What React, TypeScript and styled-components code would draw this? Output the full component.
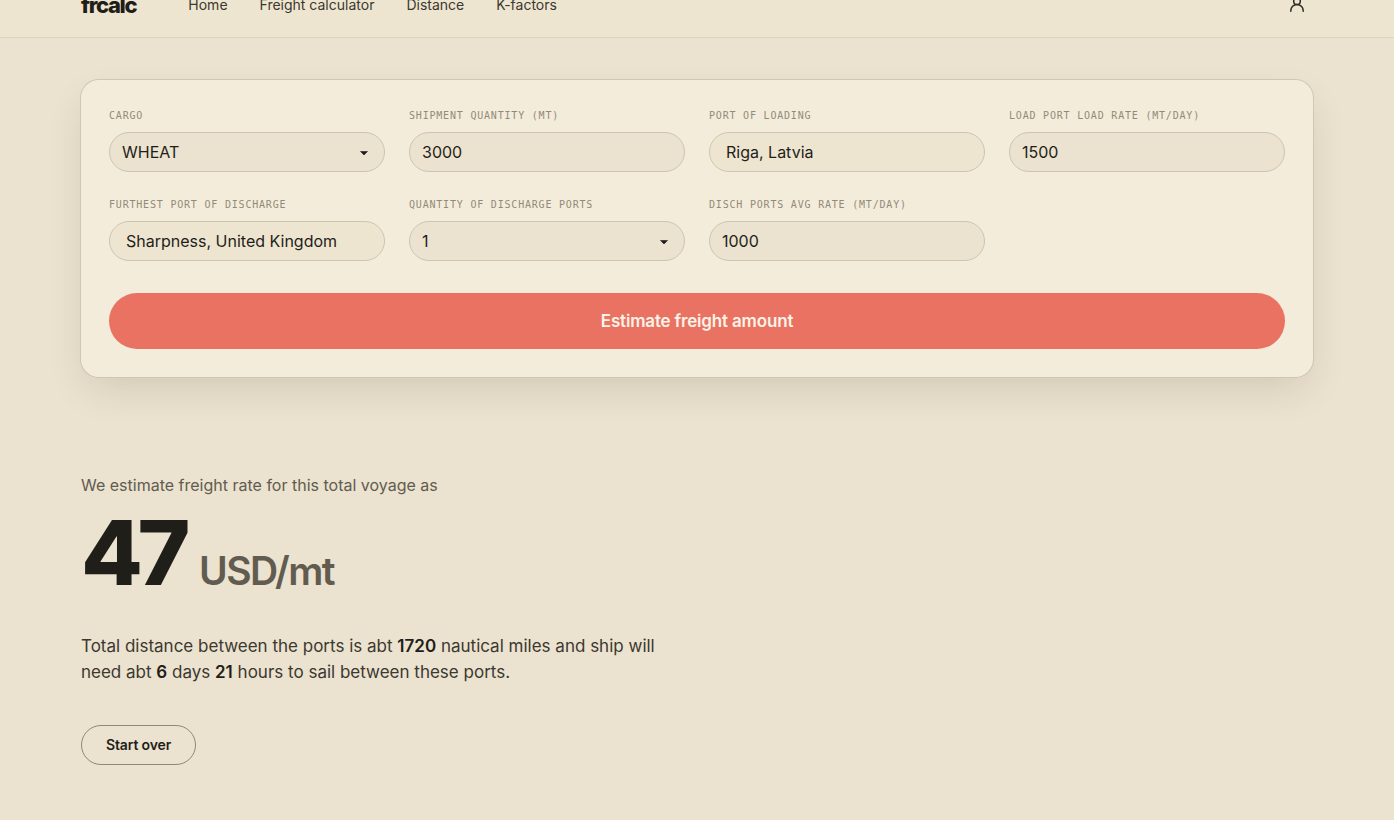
import React, { useId, useState } from "react";
import styled, { createGlobalStyle, css } from "styled-components";

const sans = `Inter, "Liberation Sans", sans-serif`;
const mono = `"DejaVu Sans Mono", "Liberation Mono", monospace`;

const GlobalStyle = createGlobalStyle`
  *, *::before, *::after { box-sizing: border-box; }
  html { background: #ebe2cf; }
  body {
    margin: 0;
    background: #ebe2cf;
    color: #1f1e19;
    font-family: ${sans};
    font-size: 16px;
    line-height: 24px;
    overflow: hidden auto;
  }
  button, input, select { font: inherit; color: inherit; }
`;

const Header = styled.header`
  margin-top: -28px;
  background: #eee5d0;
  border-bottom: 1px solid #ddd3c0;
`;

const Container = styled.div`
  width: 100%;
  max-width: 1280px;
  margin: 0 auto;
  padding: 0 24px;
`;

const HeaderRow = styled(Container)`
  display: flex;
  align-items: center;
  height: 65px;
`;

const Logo = styled.a`
  margin-right: 52px;
  color: #1f1e19;
  font-size: 22px;
  font-weight: 800;
  letter-spacing: -0.06em;
  text-decoration: none;
`;

const Nav = styled.nav`
  display: flex;
  gap: 32px;
`;

const NavLink = styled.a`
  color: #3b382f;
  font-size: 14px;
  text-decoration: none;
`;

const AccountButton = styled.button`
  display: grid;
  place-items: center;
  width: 32px;
  height: 32px;
  margin-left: auto;
  padding: 0;
  border: 0;
  background: none;
  cursor: pointer;
`;

const Main = styled(Container).attrs({ as: "main" })`
  padding-top: 42px;
  padding-bottom: 55px;
`;

const Card = styled.form`
  padding: 27px 28px 28px;
  border-radius: 18px;
  background: #f4ecda;
  box-shadow:
    0 0 0 1px #cfc6b4,
    0 16px 40px -8px rgba(60, 56, 40, 0.16);
`;

const Fields = styled.div`
  display: grid;
  grid-template-columns: repeat(4, minmax(0, 1fr));
  gap: 24px;
  margin-bottom: 32px;
`;

const Field = styled.div`
  display: flex;
  flex-direction: column;
  gap: 7px;
`;

const Label = styled.label`
  color: #928a79;
  font-family: ${mono};
  font-size: 10px;
  line-height: 18px;
  letter-spacing: 0.08em;
  text-transform: uppercase;
  white-space: nowrap;
`;

const control = css`
  width: 100%;
  height: 40px;
  margin: 0;
  border: 1px solid #cdc4b2;
  border-radius: 20px;
  outline: none;
  background: #ebe2d0;
  color: #1f1e19;
`;

const Input = styled.input<{ $port?: boolean }>`
  ${control}
  padding: 0 ${(p) => (p.$port ? 16 : 12)}px;
  background: ${(p) => (p.$port ? "#eee5d1" : "#ebe2d0")};
`;

const SelectBox = styled.div`
  position: relative;
`;

const Select = styled.select`
  ${control}
  display: block;
  padding: 0 32px 0 12px;
  appearance: none;
`;

const Caret = styled.svg`
  position: absolute;
  top: 19px;
  right: 17px;
  pointer-events: none;
`;

const SubmitButton = styled.button`
  display: block;
  width: 100%;
  height: 56px;
  border: 0;
  border-radius: 28px;
  background: #e97262;
  color: #fbf3e6;
  font-size: 17px;
  font-weight: 600;
  letter-spacing: -0.01em;
  cursor: pointer;
`;

const Result = styled.section`
  padding-top: 96px;
`;

const Lead = styled.p`
  margin: 0 0 10px;
  color: #625c50;
`;

const Rate = styled.p`
  display: flex;
  align-items: baseline;
  gap: 14px;
  margin: 0 0 34px;
  font-size: 90px;
  font-weight: 800;
  line-height: 92px;
  letter-spacing: -0.06em;
`;

const Unit = styled.span`
  color: #625c50;
  font-size: 39px;
  font-weight: 600;
  line-height: 40px;
  letter-spacing: -0.04em;
`;

const Summary = styled.p`
  max-width: 600px;
  margin: 0 0 40px;
  color: #3b382f;
  font-size: 17px;
  line-height: 26px;
`;

const Strong = styled.strong`
  color: #1f1e19;
  font-weight: 600;
`;

const ResetButton = styled.button`
  height: 40px;
  padding: 0 24px;
  border: 1px solid #8f8778;
  border-radius: 20px;
  background: transparent;
  font-size: 14px;
  font-weight: 600;
  letter-spacing: -0.01em;
  cursor: pointer;
`;

function UserIcon() {
  return (
    <svg width="18" height="18" viewBox="0 0 18 18" fill="none" stroke="#2b2922" strokeWidth="1.5" strokeLinecap="round" aria-hidden="true">
      <circle cx="9" cy="5.2" r="3.3" />
      <path d="M2.8 15.2v-.5a6.2 6.2 0 0 1 12.4 0v.5" />
    </svg>
  );
}

function TextField({ label, value, port }: { label: string; value: string; port?: boolean }) {
  const id = useId();
  const [text, setText] = useState(value);
  return (
    <Field>
      <Label htmlFor={id}>{label}</Label>
      <Input id={id} $port={port} value={text} onChange={(e) => setText(e.target.value)} />
    </Field>
  );
}

function SelectField({ label, value }: { label: string; value: string }) {
  const id = useId();
  return (
    <Field>
      <Label htmlFor={id}>{label}</Label>
      <SelectBox>
        <Select id={id} defaultValue={value}>
          <option>{value}</option>
        </Select>
        <Caret width="8" height="5" viewBox="0 0 8 5" aria-hidden="true">
          <path d="M0.5 0.5h7L4 4z" fill="#1f1e19" stroke="#1f1e19" strokeWidth="0.6" strokeLinejoin="round" />
        </Caret>
      </SelectBox>
    </Field>
  );
}

export default function App() {
  return (
    <>
      <GlobalStyle />
      <Header>
        <HeaderRow>
          <Logo href="#">frcalc</Logo>
          <Nav>
            <NavLink href="#home">Home</NavLink>
            <NavLink href="#freight">Freight calculator</NavLink>
            <NavLink href="#distance">Distance</NavLink>
            <NavLink href="#k-factors">K-factors</NavLink>
          </Nav>
          <AccountButton aria-label="Account">
            <UserIcon />
          </AccountButton>
        </HeaderRow>
      </Header>
      <Main>
        <Card onSubmit={(e) => e.preventDefault()}>
          <Fields>
            <SelectField label="Cargo" value="WHEAT" />
            <TextField label="Shipment quantity (mt)" value="3000" />
            <TextField label="Port of loading" value="Riga, Latvia" port />
            <TextField label="Load port load rate (mt/day)" value="1500" />
            <TextField label="Furthest port of discharge" value="Sharpness, United Kingdom" port />
            <SelectField label="Quantity of discharge ports" value="1" />
            <TextField label="Disch ports avg rate (mt/day)" value="1000" />
          </Fields>
          <SubmitButton type="submit">Estimate freight amount</SubmitButton>
        </Card>
        <Result>
          <Lead>We estimate freight rate for this total voyage as</Lead>
          <Rate>
            47 <Unit>USD/mt</Unit>
          </Rate>
          <Summary>
            Total distance between the ports is abt <Strong>1720</Strong> nautical miles and ship will need abt{" "}
            <Strong>6</Strong> days <Strong>21</Strong> hours to sail between these ports.
          </Summary>
          <ResetButton type="button">Start over</ResetButton>
        </Result>
      </Main>
    </>
  );
}
